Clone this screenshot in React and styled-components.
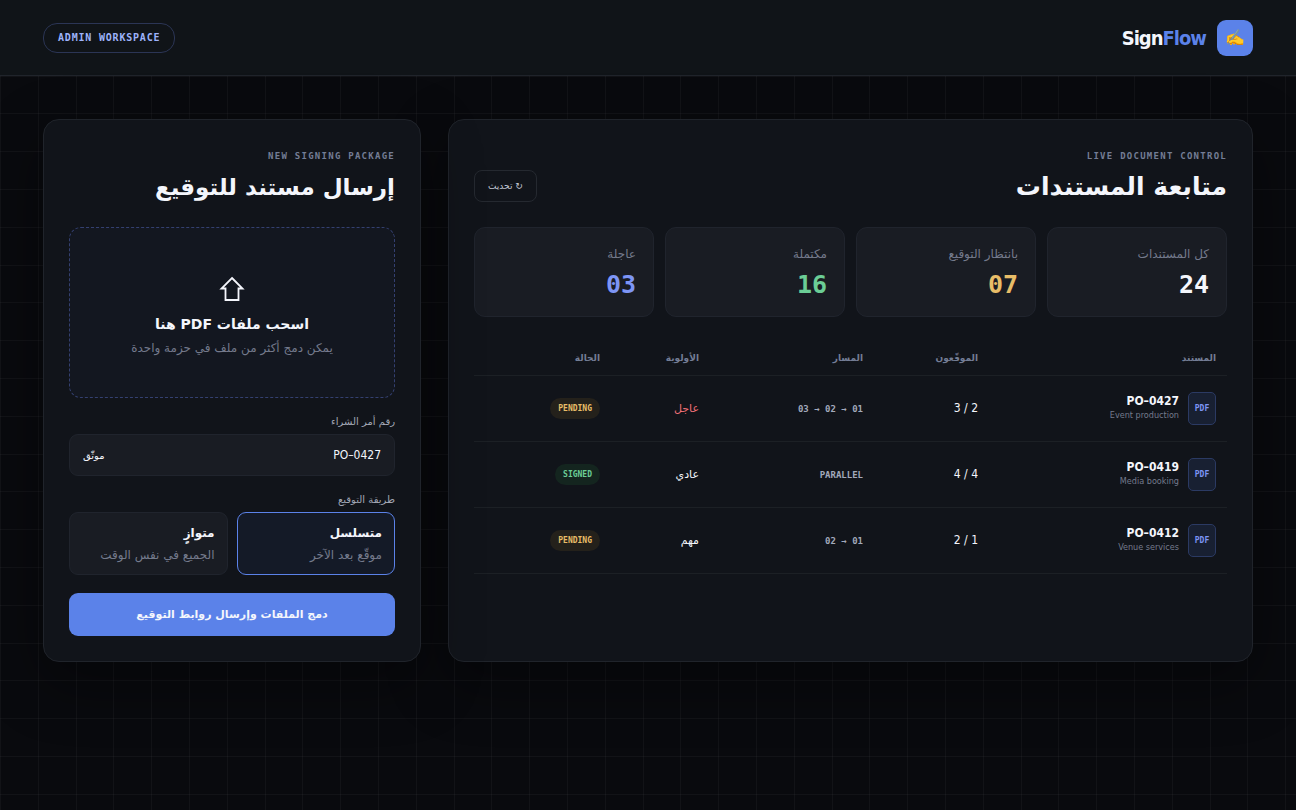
import React, { useState } from "react";
import styled, { createGlobalStyle } from "styled-components";

const latin = `"DejaVu Sans Condensed", "DejaVu Sans", sans-serif`;
const mono = `"DejaVu Sans Mono", monospace`;

const GlobalStyle = createGlobalStyle`
    * {
        box-sizing: border-box;
    }

    body {
        margin: 0;
        min-height: 100vh;
        color: #f4f6fc;
        font-family: "DejaVu Sans", sans-serif;
        font-size: 12px;
        background-color: #090a0e;
        --line: rgba(255, 255, 255, 0.035);
        --stops: var(--line) 0 1px, transparent 1px 38px, var(--line) 38px 39px,
            transparent 39px 76px, var(--line) 76px 77px, transparent 77px 113px,
            var(--line) 113px 114px, transparent 114px 151px,
            var(--line) 151px 152px, transparent 152px 189px;
        background-image: linear-gradient(to right, var(--stops)),
            linear-gradient(to bottom, var(--stops));
        background-size: 189px 189px;
    }

    button,
    input {
        font: inherit;
        color: inherit;
    }
`;

const Header = styled.header`
    display: flex;
    align-items: center;
    justify-content: space-between;
    height: 76px;
    padding: 0 43px;
    background: #101418;
    border-bottom: 1px solid #20242b;
`;

const Brand = styled.div`
    display: flex;
    align-items: center;
    gap: 11px;
    font-family: ${latin};
    font-size: 20px;
    font-weight: bold;
    letter-spacing: -1px;

    b {
        color: #5b82e9;
    }
`;

const BrandMark = styled.span`
    display: grid;
    place-items: center;
    width: 36px;
    height: 36px;
    border-radius: 9px;
    background: #5b82e9;
    font-size: 16px;
    letter-spacing: 0;
`;

const WorkspaceTag = styled.span`
    padding: 7px 14px;
    border: 1px solid #2b3555;
    border-radius: 14px;
    color: #9db2fa;
    font: bold 10px/14px ${mono};
    letter-spacing: 0.08em;
`;

const Main = styled.main`
    display: grid;
    grid-template-columns: minmax(0, 1fr) 378px;
    gap: 27px;
    padding: 43px;
`;

const Panel = styled.section`
    padding: 25px;
    background: #11141a;
    border: 1px solid #20242b;
    border-radius: 16px;
    box-shadow: 0 20px 60px rgba(0, 0, 0, 0.4);
`;

const PanelHead = styled.div`
    display: flex;
    align-items: center;
    justify-content: space-between;
    height: 82px;
`;

const Heading = styled.div`
    align-self: flex-start;
`;

const Eyebrow = styled.div`
    color: #747d95;
    font: bold 9px/22px ${mono};
    letter-spacing: 0.14em;
`;

const Title = styled.h1`
    margin: 0;
    font-size: 25px;
    line-height: 40px;
`;

const FormTitle = styled(Title)`
    font-size: 23px;
`;

const RefreshButton = styled.button`
    height: 32px;
    padding: 0 13px;
    border: 1px solid #252930;
    border-radius: 8px;
    background: transparent;
    color: #c2c7d5;
    font-size: 9px;
`;

const Stats = styled.div`
    display: grid;
    grid-template-columns: repeat(4, 1fr);
    gap: 11px;
`;

const Stat = styled.div`
    height: 90px;
    padding: 16px 17px;
    background: #191c23;
    border: 1px solid #20242d;
    border-radius: 11px;
    color: #747a8c;
    line-height: 20px;

    strong {
        display: block;
        color: ${({ $color }) => $color};
        font: bold 25px/42px ${mono};
    }
`;

const Table = styled.table`
    width: 100%;
    margin-top: 25px;
    border-collapse: collapse;
    table-layout: fixed;

    th,
    td {
        padding: 0 11px;
        text-align: right;
        border-bottom: 1px solid #1c2025;
    }

    th {
        height: 33px;
        color: #747d95;
        font-size: 9px;
    }

    td {
        height: 66px;
    }
`;

const Col = styled.col`
    width: ${({ $width }) => $width || "auto"};
`;

const DocCell = styled.div`
    display: flex;
    align-items: center;
    gap: 9px;
    font-family: ${latin};
    line-height: 14px;

    strong,
    small {
        display: block;
    }

    small {
        color: #747a8c;
        font-size: 9px;
    }
`;

const FileMark = styled.span`
    display: grid;
    place-items: center;
    width: 31px;
    height: 36px;
    width: 28px;
    height: 33px;
    border: 1px solid #2b3a63;
    border-radius: 5px;
    background: #182032;
    color: #7d95f5;
    font: bold 8px ${mono};
`;

const Signers = styled.span`
    font-family: ${latin};
`;

const Route = styled.span`
    color: #a2a9bb;
    font: bold 9px ${mono};
`;

const Priority = styled.span`
    color: ${({ $urgent }) => ($urgent ? "#ef7076" : "inherit")};
    font-size: 11px;
`;

const Status = styled.span`
    display: inline-block;
    padding: 0 8px;
    border-radius: 11px;
    background: ${({ $signed }) => ($signed ? "#14251f" : "#24211b")};
    color: ${({ $signed }) => ($signed ? "#6bcd96" : "#e8bd68")};
    font: bold 8px/21px ${mono};
`;

const DropZone = styled.button`
    display: flex;
    flex-direction: column;
    align-items: center;
    justify-content: center;
    width: 100%;
    height: 171px;
    border: 1px dashed #344070;
    border-radius: 12px;
    background: #131720;

    svg {
        margin: 9px 0;
    }

    strong {
        font-size: 14px;
        line-height: 26px;
    }

    small {
        color: #747a8c;
        font-size: 12px;
        line-height: 22px;
    }
`;

const Label = styled.label`
    display: block;
    padding: 14px 0 2px;
    color: #a2a7b5;
    font-size: 10px;
    line-height: 20px;
`;

const Field = styled.div`
    display: flex;
    align-items: center;
    justify-content: space-between;
    height: 42px;
    padding: 0 13px;
    background: #191c23;
    border: 1px solid #20242d;
    border-radius: 9px;

    input {
        flex: 1;
        min-width: 0;
        padding: 0;
        border: 0;
        outline: 0;
        background: transparent;
        font-family: ${latin};
    }

    small {
        font-size: 10px;
    }
`;

const Modes = styled.fieldset`
    display: grid;
    grid-template-columns: 1fr 1fr;
    gap: 9px;
    margin: 0;
    padding: 0;
    border: 0;

    legend {
        padding: 14px 0 2px;
        color: #a2a7b5;
        font-size: 10px;
        line-height: 20px;
    }
`;

const Mode = styled.label`
    height: 63px;
    padding: 9px 12px;
    background: ${({ $active }) => ($active ? "#141a27" : "#191c23")};
    border: 1px solid ${({ $active }) => ($active ? "#5b82e9" : "#20242d")};
    border-radius: 9px;
    line-height: 22px;

    input {
        position: absolute;
        opacity: 0;
    }

    strong,
    small {
        display: block;
    }

    small {
        color: #747a8c;
        font-size: 12px;
    }
`;

const SubmitButton = styled.button`
    width: 100%;
    height: 43px;
    margin-top: 18px;
    border: 0;
    border-radius: 9px;
    background: #5b82e9;
    font-size: 11px;
    font-weight: bold;
`;

const stats = [
    { label: "كل المستندات", value: "24", color: "#f4f6fc" },
    { label: "بانتظار التوقيع", value: "07", color: "#e8bd68" },
    { label: "مكتملة", value: "16", color: "#6bcd96" },
    { label: "عاجلة", value: "03", color: "#7d95f5" },
];

const documents = [
    {
        id: "PO–0427",
        name: "Event production",
        signers: "2 / 3",
        route: "01 → 02 → 03",
        priority: "عاجل",
        urgent: true,
        status: "PENDING",
    },
    {
        id: "PO–0419",
        name: "Media booking",
        signers: "4 / 4",
        route: "PARALLEL",
        priority: "عادي",
        status: "SIGNED",
    },
    {
        id: "PO–0412",
        name: "Venue services",
        signers: "1 / 2",
        route: "01 → 02",
        priority: "مهم",
        status: "PENDING",
    },
];

const modes = [
    { id: "serial", title: "متسلسل", text: "موقّع بعد الآخر" },
    { id: "parallel", title: "متوازٍ", text: "الجميع في نفس الوقت" },
];

function UploadArrow() {
    return (
        <svg width="26" height="26" viewBox="0 0 26 26" aria-hidden="true">
            <path
                d="M13 2 L23.5 12.5 H19.5 V24 H6.5 V12.5 H2.5 Z"
                fill="none"
                stroke="#f4f6fc"
                strokeWidth="1.8"
            />
        </svg>
    );
}

function DocumentTable() {
    return (
        <Table>
            <colgroup>
                <Col />
                <Col $width="115px" />
                <Col $width="164px" />
                <Col $width="99px" />
                <Col $width="137px" />
            </colgroup>
            <thead>
                <tr>
                    <th>المستند</th>
                    <th>الموقّعون</th>
                    <th>المسار</th>
                    <th>الأولوية</th>
                    <th>الحالة</th>
                </tr>
            </thead>
            <tbody>
                {documents.map((doc) => (
                    <tr key={doc.id}>
                        <td>
                            <DocCell>
                                <FileMark>PDF</FileMark>
                                <div>
                                    <strong>{doc.id}</strong>
                                    <small>{doc.name}</small>
                                </div>
                            </DocCell>
                        </td>
                        <td>
                            <Signers>{doc.signers}</Signers>
                        </td>
                        <td>
                            <Route>{doc.route}</Route>
                        </td>
                        <td>
                            <Priority $urgent={doc.urgent}>
                                {doc.priority}
                            </Priority>
                        </td>
                        <td>
                            <Status $signed={doc.status === "SIGNED"}>
                                {doc.status}
                            </Status>
                        </td>
                    </tr>
                ))}
            </tbody>
        </Table>
    );
}

function PackageForm() {
    const [mode, setMode] = useState("serial");
    const [order, setOrder] = useState("PO–0427");

    return (
        <Panel>
            <PanelHead>
                <Heading>
                    <Eyebrow>NEW SIGNING PACKAGE</Eyebrow>
                    <FormTitle as="h2">إرسال مستند للتوقيع</FormTitle>
                </Heading>
            </PanelHead>
            <DropZone type="button">
                <UploadArrow />
                <strong>اسحب ملفات PDF هنا</strong>
                <small>يمكن دمج أكثر من ملف في حزمة واحدة</small>
            </DropZone>
            <Label htmlFor="order">رقم أمر الشراء</Label>
            <Field>
                <input
                    id="order"
                    value={order}
                    onChange={(e) => setOrder(e.target.value)}
                />
                <small>موثّق</small>
            </Field>
            <Modes>
                <legend>طريقة التوقيع</legend>
                {modes.map((item) => (
                    <Mode key={item.id} $active={mode === item.id}>
                        <input
                            type="radio"
                            name="mode"
                            checked={mode === item.id}
                            onChange={() => setMode(item.id)}
                        />
                        <strong>{item.title}</strong>
                        <small>{item.text}</small>
                    </Mode>
                ))}
            </Modes>
            <SubmitButton type="button">
                دمج الملفات وإرسال روابط التوقيع
            </SubmitButton>
        </Panel>
    );
}

function App() {
    return (
        <div dir="rtl" lang="ar">
            <GlobalStyle />
            <Header>
                <Brand>
                    <BrandMark>✍️</BrandMark>
                    <span dir="ltr">
                        Sign<b>Flow</b>
                    </span>
                </Brand>
                <WorkspaceTag dir="ltr">ADMIN WORKSPACE</WorkspaceTag>
            </Header>
            <Main>
                <Panel>
                    <PanelHead>
                        <Heading>
                            <Eyebrow>LIVE DOCUMENT CONTROL</Eyebrow>
                            <Title>متابعة المستندات</Title>
                        </Heading>
                        <RefreshButton type="button">↻ تحديث</RefreshButton>
                    </PanelHead>
                    <Stats>
                        {stats.map((item) => (
                            <Stat key={item.label} $color={item.color}>
                                {item.label}
                                <strong>{item.value}</strong>
                            </Stat>
                        ))}
                    </Stats>
                    <DocumentTable />
                </Panel>
                <PackageForm />
            </Main>
        </div>
    );
}

export default App;
